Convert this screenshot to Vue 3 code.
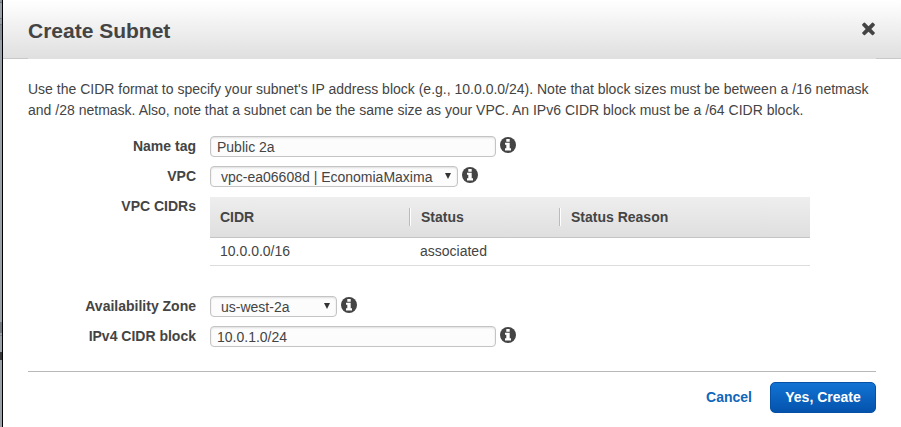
<script setup>
const fields = {
  name: 'Public 2a',
  vpc: 'vpc-ea06608d | EconomiaMaxima',
  zone: 'us-west-2a',
  cidr: '10.0.1.0/24',
}
const rows = [
  { id: 'name', label: 'Name tag', kind: 'input' },
  { id: 'vpc', label: 'VPC', kind: 'select' },
  { id: 'cidrs', label: 'VPC CIDRs', kind: 'table' },
  { id: 'zone', label: 'Availability Zone', kind: 'select' },
  { id: 'cidr', label: 'IPv4 CIDR block', kind: 'input' },
]
const cidrs = [{ cidr: '10.0.0.0/16', status: 'associated', reason: '' }]
</script>

<template>
  <div class="page">
    <div class="backdrop"></div>
    <div class="dialog">
      <header class="header">
        <h1>Create Subnet</h1>
        <svg class="close" width="14" height="14" viewBox="0 0 14 14">
          <path d="M3 0.8L6.5 4.2L10 0.8Q10.6 0.3 11.2 0.8L12.7 2.3Q13.2 2.9 12.7 3.5L9.3 7L12.7 10.4Q13.2 11 12.7 11.6L11.2 13.1Q10.6 13.6 10 13.1L6.5 9.7L3 13.1Q2.4 13.6 1.8 13.1L0.3 11.6Q-0.2 11 0.3 10.4L3.7 7L0.3 3.5Q-0.2 2.9 0.3 2.3L1.8 0.8Q2.4 0.3 3 0.8Z" />
        </svg>
      </header>
      <div class="body">
        <p class="intro">
          <span>Use the CIDR format to specify your subnet's IP address block (e.g., 10.0.0.0/24). Note that block sizes must be between a /16 netmask</span>
          <span class="second">and /28 netmask. Also, note that a subnet can be the same size as your VPC. An IPv6 CIDR block must be a /64 CIDR block.</span>
        </p>
        <div class="form">
          <div v-for="row in rows" :key="row.id" class="row" :class="row.kind">
            <label class="label">{{ row.label }}</label>
            <div v-if="row.kind === 'table'" class="grid">
              <div class="line head">
                <div class="cell">CIDR</div>
                <div class="cell">Status</div>
                <div class="cell">Status Reason</div>
              </div>
              <div v-for="c in cidrs" :key="c.cidr" class="line">
                <div class="cell">{{ c.cidr }}</div>
                <div class="cell">{{ c.status }}</div>
                <div class="cell">{{ c.reason }}</div>
              </div>
            </div>
            <template v-else>
              <div class="field" :class="[row.kind + '-field', row.id]">
                <span>{{ fields[row.id] }}</span>
                <svg v-if="row.kind === 'select'" class="arrow" width="6" height="6" viewBox="0 0 6 6">
                  <path d="M0 0H6L3 6Z" />
                </svg>
              </div>
              <svg class="info" width="16" height="16" viewBox="0 0 16 16">
                <circle cx="8" cy="8" r="8" />
                <path d="M6.3 2H9.7V4.7H6.3ZM5 5.7H9.7V11.3H11V13.5H5V11.3H6.3V7.8H5Z" />
              </svg>
            </template>
          </div>
        </div>
        <footer class="footer">
          <a class="cancel">Cancel</a>
          <button class="primary">Yes, Create</button>
        </footer>
      </div>
    </div>
  </div>
</template>

<style>
body {
  margin: 0;
  background: #fff;
}
</style>

<style scoped>
.page {
  display: flex;
  width: 901px;
  height: 427px;
  overflow: hidden;
  font: 14px/21px "Liberation Sans", Arial, sans-serif;
  color: #444;
  background: #fff;
}
.backdrop {
  box-sizing: border-box;
  flex: none;
  width: 3px;
  border-right: 1px solid #000;
  background: linear-gradient(
    #8b949b 0 2px, #687078 2px 3px, #99a2a9 3px 18px, #727b82 18px 19px,
    #929ba2 19px 24px, #727b82 24px 25px, #858e95 25px 40px, #99a2a9 40px 322px,
    #737980 322px 333px, #99a2a9 333px 335px, #7c848b 335px 336px,
    #99a2a9 336px 352px, #36383b 352px 360px, #99a2a9 360px
  );
}
.dialog {
  flex: 1;
}
.header {
  box-sizing: border-box;
  display: flex;
  justify-content: space-between;
  height: 59px;
  padding: 0 25px;
  background:
    linear-gradient(#c8c8c8, #c8c8c8) left bottom / 25px 1px no-repeat,
    linear-gradient(#c8c8c8, #c8c8c8) right bottom / 25px 1px no-repeat,
    linear-gradient(#fff, #dfdfdf);
}
h1 {
  margin: 18px 0 0;
  font-size: 21px;
  line-height: 25px;
  font-weight: bold;
}
.close {
  margin-top: 22px;
  overflow: visible;
  fill: #444;
}
.body {
  padding: 20px 25px 0;
}
.intro {
  margin: 0;
}
.intro span {
  display: block;
  white-space: nowrap;
}
.intro .second {
  word-spacing: 0.04px;
}
.form {
  padding-top: 15px;
}
.row {
  display: flex;
  align-items: flex-start;
  height: 30px;
}
.row.table {
  height: 100px;
}
.label {
  flex: none;
  width: 168px;
  margin-right: 14px;
  text-align: right;
  font-weight: bold;
  line-height: 20px;
}
.field {
  box-sizing: border-box;
  display: flex;
  align-items: center;
  justify-content: space-between;
  height: 21px;
  border: 1px solid #c4c4c4;
  border-radius: 4px;
  background: #fcfcfc;
  box-shadow: inset 0 1px 2px rgba(0, 0, 0, 0.12);
  line-height: 19px;
  white-space: nowrap;
}
.input-field {
  width: 286px;
  padding: 1px 6px 0;
}
.select-field {
  padding: 1px 6px 0 10px;
}
.select-field.vpc {
  width: 248px;
}
.select-field.zone {
  width: 127px;
}
.arrow {
  margin-top: -2px;
  fill: #333;
}
.info {
  margin: 1px 0 0 4px;
}
.info circle {
  fill: #444;
}
.info path {
  fill: #fff;
}
.grid {
  width: 600px;
  margin-top: 1px;
}
.line {
  box-sizing: border-box;
  display: grid;
  grid-template-columns: 200px 150px 250px;
  align-items: center;
  height: 28px;
  border-bottom: 1px solid #ddd;
}
.cell {
  padding-left: 10px;
}
.head {
  height: 41px;
  border-color: #c4c4c4;
  background: linear-gradient(#eee, #dfdfdf);
  font-weight: bold;
}
.head .cell + .cell {
  height: 18px;
  line-height: 18px;
  margin-left: -1px;
  border-left: 1px solid #bbb;
  box-shadow: inset 1px 0 #fff;
  padding-left: 11px;
}
.footer {
  display: flex;
  justify-content: flex-end;
  align-items: center;
  height: 50px;
  margin-top: 15px;
  border-top: 1px solid #b8b8b8;
}
.cancel {
  margin-right: 18px;
  color: #1166bb;
  font-weight: bold;
}
.primary {
  box-sizing: border-box;
  width: 106px;
  height: 31px;
  padding: 0;
  border: 1px solid #0651a5;
  border-radius: 5px;
  background: linear-gradient(#1273d3, #0453ad);
  color: #fff;
  font: bold 14px/28px "Liberation Sans", Arial, sans-serif;
}
</style>
